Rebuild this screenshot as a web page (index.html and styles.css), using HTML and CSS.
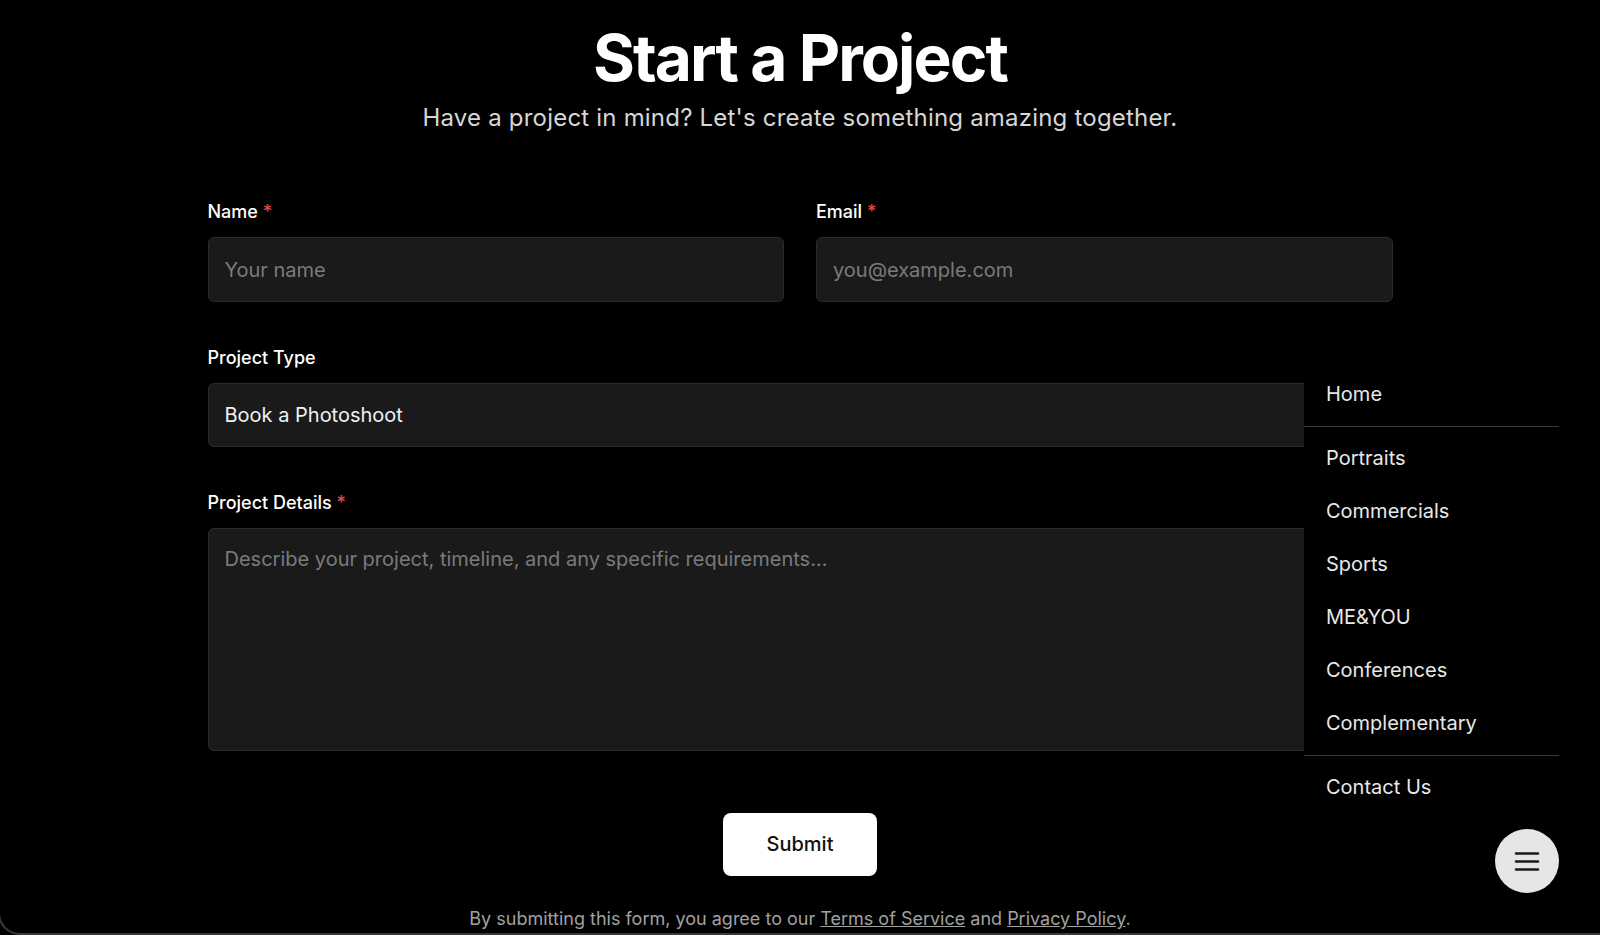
FILE: index.html
```html
<!DOCTYPE html>
<html lang="en">
<head>
    <meta charset="UTF-8">
    <meta name="viewport" content="width=device-width, initial-scale=1.0">
    <title>Start a Project</title>
    <link rel="stylesheet" href="styles.css">
</head>
<body>
    <div class="screen">
        <main class="contact">
            <header class="contact-head">
                <h1>Start a Project</h1>
                <p>Have a project in mind? Let's create something amazing together.</p>
            </header>

            <form class="contact-form" onsubmit="return false">
                <div class="form-row">
                    <div class="field">
                        <label for="name">Name <span class="req">*</span></label>
                        <input id="name" type="text" placeholder="Your name">
                    </div>
                    <div class="field">
                        <label for="email">Email <span class="req">*</span></label>
                        <input id="email" type="email" placeholder="you@example.com">
                    </div>
                </div>

                <div class="field">
                    <label for="type">Project Type</label>
                    <div class="select-box" id="type">Book a Photoshoot</div>
                </div>

                <div class="field">
                    <label for="details">Project Details <span class="req">*</span></label>
                    <textarea id="details" placeholder="Describe your project, timeline, and any specific requirements..."></textarea>
                </div>

                <div class="submit-wrap">
                    <button class="submit-btn" type="submit">Submit</button>
                </div>

                <p class="legal">By submitting this form, you agree to our <a href="#">Terms of Service</a> and <a href="#">Privacy Policy</a>.</p>
            </form>
        </main>

        <!-- slide-out menu, open state -->
        <nav class="side-menu">
            <a href="#">Home</a>
            <hr>
            <a href="#">Portraits</a>
            <a href="#">Commercials</a>
            <a href="#">Sports</a>
            <a href="#">ME&amp;YOU</a>
            <a href="#">Conferences</a>
            <a href="#">Complementary</a>
            <hr>
            <a href="#">Contact Us</a>
        </nav>

        <button class="menu-toggle" aria-label="Menu">
            <svg width="26" height="20" viewBox="0 0 26 20">
                <path d="M2 2.5h22M2 10.5h22M2 18.5h22" stroke="#1c1c1c" stroke-width="2.6" stroke-linecap="round"/>
            </svg>
        </button>
    </div>
</body>
</html>
```

FILE: styles.css
```css
body {
    margin: 0;
    background-color: #000;
    font-family: 'Inter', 'Helvetica Neue', sans-serif;
    color: #fff;
    overflow: hidden;
}

.screen {
    position: relative;
    height: 935px;
    box-sizing: border-box;
    margin-left: -2px;
    border-left: 2px solid #3a3a3a;
    border-bottom: 2px solid #3a3a3a;
    border-bottom-left-radius: 22px;
    overflow: hidden;
}

.contact {
    width: 1185px;
    margin: 0 auto;
    padding-top: 22px;
}

.contact-head {
    text-align: center;
}

.contact-head h1 {
    margin: 0;
    font-size: 64px;
    font-weight: 700;
    line-height: 72px;
    letter-spacing: -0.03em;
}

.contact-head p {
    margin: 8px 0 0;
    font-size: 24px;
    line-height: 32px;
    letter-spacing: 0.2px;
    color: #d6d6d6;
}

.contact-form {
    margin-top: 64px;
}

.form-row {
    display: grid;
    grid-template-columns: 1fr 1fr;
    gap: 32px;
}

.field {
    display: flex;
    flex-direction: column;
    margin-bottom: 42px;
}

.field label {
    font-size: 18px;
    font-weight: 500;
    line-height: 28px;
    margin-bottom: 11px;
}

.req {
    color: #e5484d;
}

.field input,
.select-box,
.field textarea {
    box-sizing: border-box;
    width: 100%;
    background-color: #1a1a1a;
    border: 1px solid #2b2b2b;
    border-radius: 6px;
    color: #f0f0f0;
    font-family: inherit;
    font-size: 20px;
    padding: 0 16px;
    outline: none;
}

.field input {
    height: 65px;
}

.select-box {
    height: 64px;
    display: flex;
    align-items: center;
}

.field textarea {
    height: 223px;
    padding-top: 18px;
    resize: none;
}

.field input::placeholder,
.field textarea::placeholder {
    color: #7a7a7a;
}

.submit-wrap {
    display: flex;
    justify-content: center;
    margin-top: 62px;
}

.submit-btn {
    background-color: #fff;
    color: #111;
    border: none;
    border-radius: 8px;
    font-family: inherit;
    font-size: 20px;
    font-weight: 500;
    padding: 17px 44px;
    line-height: 29px;
    cursor: pointer;
}

.legal {
    margin: 32px 0 0;
    text-align: center;
    font-size: 18px;
    color: #a0a0a0;
}

.legal a {
    color: #a0a0a0;
}

.side-menu {
    position: absolute;
    top: 360px;
    right: 41px;
    width: 255px;
    padding: 8px 0;
    background-color: #000;
    display: flex;
    flex-direction: column;
}

.side-menu a {
    display: block;
    padding: 12px 22px;
    font-size: 20px;
    line-height: 29px;
    color: #e8e8e8;
    text-decoration: none;
}

.side-menu hr {
    margin: 5px 0;
    border: none;
    border-top: 1px solid #3a3a3a;
}

.menu-toggle {
    position: absolute;
    right: 41px;
    bottom: 40px;
    width: 64px;
    height: 64px;
    border-radius: 50%;
    border: none;
    background-color: #e6e6e6;
    display: flex;
    justify-content: center;
    align-items: center;
    cursor: pointer;
}
```
